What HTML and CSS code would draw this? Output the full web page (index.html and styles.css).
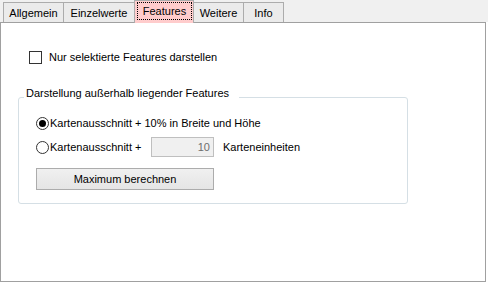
FILE: index.html
```html
<!DOCTYPE html>
<html lang="de">
  <head>
    <meta charset="UTF-8" />
    <title>Features</title>
    <link rel="stylesheet" href="styles.css">
  </head>
  <body>
    <div class="tabs">
      <div class="tab tab-allgemein">Allgemein</div>
      <div class="tab tab-einzel">Einzelwerte</div>
      <div class="tab tab-features active"><div class="focus">Features</div></div>
      <div class="tab tab-weitere">Weitere</div>
      <div class="tab tab-info">Info</div>
    </div>
    <div class="panel">
      <label class="check-row">
        <span class="checkbox"></span>
        <span>Nur selektierte Features darstellen</span>
      </label>
      <fieldset class="group">
        <legend>Darstellung außerhalb liegender Features</legend>
        <div class="group-body">
          <div class="radio-row first">
            <span class="radio checked"></span>
            <span>Kartenausschnitt + 10% in Breite und Höhe</span>
          </div>
          <div class="radio-row second">
            <span class="radio"></span>
            <span class="radio-label">Kartenausschnitt +</span>
            <div class="textbox">10</div>
            <span class="unit">Karteneinheiten</span>
          </div>
          <button class="btn">Maximum berechnen</button>
        </div>
      </fieldset>
    </div>
  </body>
</html>
```
FILE: styles.css
```css
body {
  margin: 0;
  background: #fff;
  font-family: "Liberation Sans", Arial, sans-serif;
  font-size: 11px;
  line-height: 13px;
  color: #000;
  width: 488px;
  height: 283px;
  overflow: hidden;
}

/* tab strip */
.tabs {
  display: flex;
  align-items: flex-end;
  height: 22px;
  background: #f0f0f0;
}

.tab {
  box-sizing: border-box;
  height: 20px;
  margin-left: -1px;
  padding-top: 4px;
  border: 1px solid #acacac;
  border-bottom: none;
  background: #ebebeb;
  text-align: center;
}

.tab-allgemein { margin-left: 3px; width: 61px; }
.tab-einzel { width: 72px; }
.tab-features { width: 60px; }
.tab-weitere { width: 51px; }
.tab-info { width: 41px; }

.tab.active {
  height: 23px;
  margin-bottom: -1px;
  padding-top: 0;
  background: #ffcccc;
  position: relative;
  z-index: 1;
}

.focus {
  box-sizing: border-box;
  height: 18px;
  margin: 1px 1px 0 2px;
  padding-top: 2px;
  border: 1px dotted #000;
}

/* page content */
.panel {
  box-sizing: border-box;
  width: 486px;
  height: 260px;
  border: 1px solid #a0a0a0;
  background: #fff;
}

.check-row {
  display: flex;
  align-items: center;
  height: 13px;
  margin: 28px 0 0 28px;
}

.checkbox {
  box-sizing: border-box;
  width: 13px;
  height: 13px;
  border: 1px solid #333;
  background: #fff;
  margin-right: 7px;
}

.group {
  box-sizing: border-box;
  width: 390px;
  height: 117px;
  margin: 23px 0 0 17px;
  padding: 0;
  border: 1px solid #d5dfe5;
  border-radius: 3px;
}

.group legend {
  margin-left: 5px;
  padding: 0 10px 8px 2px;
}

.group-body {
  padding-left: 17px;
}

.radio-row {
  display: flex;
  align-items: center;
}

.radio-row.first {
  height: 13px;
  margin-top: 9px;
}

.radio-row.second {
  height: 20px;
  margin-top: 7px;
}

.radio {
  box-sizing: border-box;
  width: 13px;
  height: 13px;
  border: 1px solid #333;
  border-radius: 50%;
  background: #fff;
  margin-right: 1px;
  display: flex;
  align-items: center;
  justify-content: center;
}

.radio.checked::after {
  content: "";
  width: 7px;
  height: 7px;
  border-radius: 50%;
  background: #000;
}

.radio-label {
  width: 101px;
}

.textbox {
  box-sizing: border-box;
  width: 63px;
  height: 20px;
  padding: 3px 3px 0 0;
  border: 1px solid #bfbfbf;
  background: #f0f0f0;
  color: #6d6d6d;
  text-align: right;
}

.unit {
  margin-left: 9px;
}

.btn {
  display: block;
  box-sizing: border-box;
  width: 178px;
  height: 22px;
  margin-top: 11px;
  padding: 0;
  border: 1px solid #acacac;
  background: linear-gradient(#f0f0f0, #e5e5e5);
  font: inherit;
  color: #000;
}
```
